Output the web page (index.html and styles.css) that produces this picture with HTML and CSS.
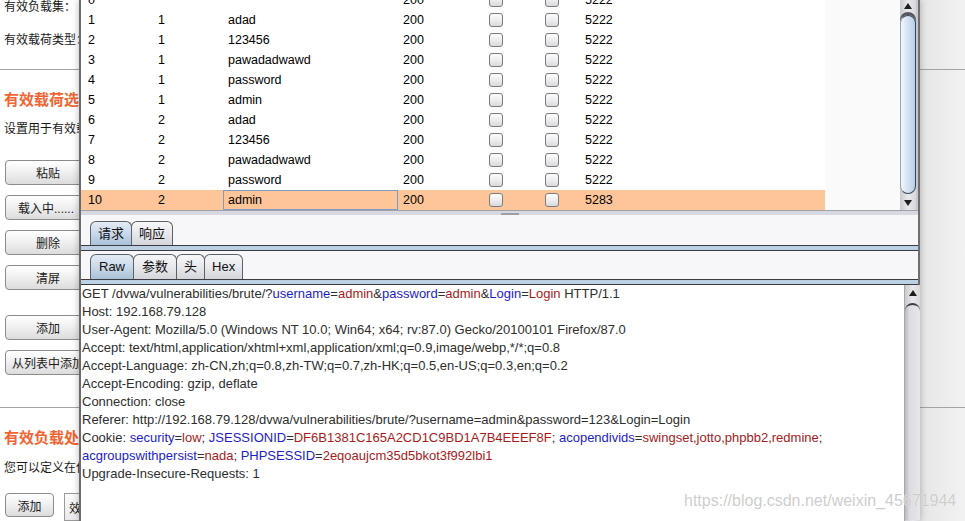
FILE: index.html
```html
<!DOCTYPE html>
<html lang="zh-CN">
<head>
<meta charset="utf-8">
<title>Intruder 攻击结果</title>
<link rel="stylesheet" href="styles.css">
</head>
<body>
<div class="page">
  <div class="lbl clip lbl-first">有效负载集：</div>
  <div class="lbl clip lbl-second">有效载荷类型：</div>
  <div class="sep sep-a"></div>
  <div class="heading clip heading-a">有效载荷选项</div>
  <div class="lbl clip desc-a">设置用于有效载荷</div>
  <div class="btn-col clip">
    <button class="btn">粘贴</button>
    <button class="btn btn-left">载入中......</button>
    <button class="btn">删除</button>
    <button class="btn">清屏</button>
    <button class="btn btn-gap">添加</button>
    <button class="btn btn-left btn-list">从列表中添加</button>
  </div>
  <div class="sep sep-b"></div>
  <div class="heading clip heading-b">有效负载处理</div>
  <div class="lbl clip desc-b">您可以定义在使用</div>
  <div class="bottom-row clip">
    <button class="btn btn-small">添加</button>
    <div class="rule-box">效果</div>
  </div>
</div>

<div class="dialog">
  <div class="results">
    <div class="viewport">
      <div class="rows">
        <div class="row"><span class="c c1">0</span><span class="c c2"></span><span class="c c3"></span><span class="c c4">200</span><span class="c c5"><i class="cb"></i></span><span class="c c6"><i class="cb"></i></span><span class="c c7">5222</span></div>
        <div class="row"><span class="c c1">1</span><span class="c c2">1</span><span class="c c3">adad</span><span class="c c4">200</span><span class="c c5"><i class="cb"></i></span><span class="c c6"><i class="cb"></i></span><span class="c c7">5222</span></div>
        <div class="row"><span class="c c1">2</span><span class="c c2">1</span><span class="c c3">123456</span><span class="c c4">200</span><span class="c c5"><i class="cb"></i></span><span class="c c6"><i class="cb"></i></span><span class="c c7">5222</span></div>
        <div class="row"><span class="c c1">3</span><span class="c c2">1</span><span class="c c3">pawadadwawd</span><span class="c c4">200</span><span class="c c5"><i class="cb"></i></span><span class="c c6"><i class="cb"></i></span><span class="c c7">5222</span></div>
        <div class="row"><span class="c c1">4</span><span class="c c2">1</span><span class="c c3">password</span><span class="c c4">200</span><span class="c c5"><i class="cb"></i></span><span class="c c6"><i class="cb"></i></span><span class="c c7">5222</span></div>
        <div class="row"><span class="c c1">5</span><span class="c c2">1</span><span class="c c3">admin</span><span class="c c4">200</span><span class="c c5"><i class="cb"></i></span><span class="c c6"><i class="cb"></i></span><span class="c c7">5222</span></div>
        <div class="row"><span class="c c1">6</span><span class="c c2">2</span><span class="c c3">adad</span><span class="c c4">200</span><span class="c c5"><i class="cb"></i></span><span class="c c6"><i class="cb"></i></span><span class="c c7">5222</span></div>
        <div class="row"><span class="c c1">7</span><span class="c c2">2</span><span class="c c3">123456</span><span class="c c4">200</span><span class="c c5"><i class="cb"></i></span><span class="c c6"><i class="cb"></i></span><span class="c c7">5222</span></div>
        <div class="row"><span class="c c1">8</span><span class="c c2">2</span><span class="c c3">pawadadwawd</span><span class="c c4">200</span><span class="c c5"><i class="cb"></i></span><span class="c c6"><i class="cb"></i></span><span class="c c7">5222</span></div>
        <div class="row"><span class="c c1">9</span><span class="c c2">2</span><span class="c c3">password</span><span class="c c4">200</span><span class="c c5"><i class="cb"></i></span><span class="c c6"><i class="cb"></i></span><span class="c c7">5222</span></div>
        <div class="row row-sel"><span class="c c1">10</span><span class="c c2">2</span><span class="c c3 focus">admin</span><span class="c c4">200</span><span class="c c5"><i class="cb"></i></span><span class="c c6"><i class="cb"></i></span><span class="c c7">5283</span></div>
      </div>
    </div>
    <div class="vscroll vscroll-table">
      <div class="arrow-btn arrow-top"><i class="tri-up"></i></div>
      <div class="thumb thumb-blue"></div>
      <div class="arrow-btn arrow-bottom"><i class="tri-down"></i></div>
    </div>
  </div>
  <div class="divider"><span class="grip"></span></div>

  <div class="tabs tabs-main">
    <div class="tab tab-on">请求</div>
    <div class="tab">响应</div>
  </div>
  <div class="tabline"></div>

  <div class="tabs tabs-sub">
    <div class="tab tab-on tab-raw">Raw</div>
    <div class="tab tab-wide">参数</div>
    <div class="tab tab-narrow">头</div>
    <div class="tab">Hex</div>
  </div>
  <div class="tabline"></div>

  <div class="request">
    <div class="req-text">
      <div class="ln">GET /dvwa/vulnerabilities/brute/?<span class="k">username</span>=<span class="v">admin</span>&amp;<span class="k">password</span>=<span class="v">admin</span>&amp;<span class="k">Login</span>=<span class="v">Login</span> HTTP/1.1</div>
      <div class="ln">Host: 192.168.79.128</div>
      <div class="ln">User-Agent: Mozilla/5.0 (Windows NT 10.0; Win64; x64; rv:87.0) Gecko/20100101 Firefox/87.0</div>
      <div class="ln">Accept: text/html,application/xhtml+xml,application/xml;q=0.9,image/webp,*/*;q=0.8</div>
      <div class="ln">Accept-Language: zh-CN,zh;q=0.8,zh-TW;q=0.7,zh-HK;q=0.5,en-US;q=0.3,en;q=0.2</div>
      <div class="ln">Accept-Encoding: gzip, deflate</div>
      <div class="ln">Connection: close</div>
      <div class="ln">Referer: http://192.168.79.128/dvwa/vulnerabilities/brute/?username=admin&amp;password=123&amp;Login=Login</div>
      <div class="ln">Cookie: <span class="k">security</span>=<span class="v">low</span>; <span class="k">JSESSIONID</span>=<span class="v">DF6B1381C165A2CD1C9BD1A7B4EEEF8F</span>; <span class="k">acopendivids</span>=<span class="v">swingset,jotto,phpbb2,redmine</span>;</div>
      <div class="ln"><span class="k">acgroupswithpersist</span>=<span class="v">nada</span>; <span class="k">PHPSESSID</span>=<span class="v">2eqoaujcm35d5bkot3f992lbi1</span></div>
      <div class="ln">Upgrade-Insecure-Requests: 1</div>
    </div>
    <div class="vscroll vscroll-req">
      <div class="arrow-btn arrow-top-req"><i class="tri-up"></i></div>
      <div class="thumb thumb-gray"></div>
    </div>
  </div>
</div>

<div class="watermark">https://blog.csdn.net/weixin_45671944</div>
</body>
</html>
```

FILE: styles.css
```css
html, body {
  margin: 0;
  padding: 0;
}

body {
  width: 965px;
  height: 521px;
  overflow: hidden;
  position: relative;
  font-family: "Liberation Sans", Arial, "Noto Sans CJK SC", sans-serif;
  font-size: 12px;
  color: #1a1a1a;
  background: linear-gradient(to right, #ffffff 0, #ffffff 900px, #e6e6e6 920px, #f2f2f2 965px);
}

/* ---------- background page ---------- */
.page {
  padding-left: 4px;
  height: 521px;
  box-sizing: border-box;
}

.clip {
  width: 75px;
  overflow: hidden;
}

.lbl {
  line-height: 14px;
  white-space: nowrap;
  font-size: 12px;
  color: #1a1a1a;
}

.lbl-first { margin-top: 0; }
.lbl-second { margin-top: 19px; }
.desc-a { margin-top: 12px; }
.desc-b { margin-top: 13px; }

.sep {
  height: 1px;
  background: #a4a4a4;
  margin-left: -4px;
}
.sep-a { margin-top: 22px; }
.sep-b { margin-top: 32px; }

.heading {
  line-height: 20px;
  font-size: 15px;
  font-weight: bold;
  color: #f26532;
  white-space: nowrap;
}
.heading-a { margin-top: 20px; }
.heading-b { margin-top: 20px; }

.btn-col {
  margin-top: 24px;
  display: flex;
  flex-direction: column;
  gap: 10px;
  padding-left: 1px;
  box-sizing: border-box;
}

.btn {
  width: 86px;
  min-width: 86px;
  height: 25px;
  flex: none;
  box-sizing: border-box;
  border: 1px solid #8c8c8c;
  border-radius: 4px;
  background: linear-gradient(#ffffff 0%, #f1f1f1 45%, #dcdcdc 100%);
  font-family: "Liberation Sans", Arial, "Noto Sans CJK SC", sans-serif;
  font-size: 12px;
  color: #1a1a1a;
  padding: 0;
  text-align: center;
  white-space: nowrap;
  overflow: hidden;
}

.btn-left {
  text-align: left;
  padding-left: 12px;
}

.btn-list { padding-left: 6px; }

.btn-gap { margin-top: 15px; }

.bottom-row {
  margin-top: 18px;
  display: flex;
  gap: 10px;
  padding-left: 1px;
  box-sizing: border-box;
}

.btn-small { width: 49px; min-width: 49px; height: 24px; }

.rule-box {
  width: 60px;
  flex: none;
  height: 28px;
  box-sizing: border-box;
  border: 1px solid #9a9a9a;
  background: linear-gradient(#fbfbfb, #e9e9e9);
  padding: 5px 0 0 4px;
  white-space: nowrap;
}

/* ---------- dialog window ---------- */
.dialog {
  position: absolute;
  left: 79px;
  top: 0;
  width: 841px;
  height: 521px;
  box-sizing: border-box;
  border-left: 2px solid #6b6b6b;
  border-right: 2px solid #6f6f6f;
  background: #f7f7f9;
  box-shadow: 0 0 7px rgba(0, 0, 0, 0.28);
  display: flex;
  flex-direction: column;
}

.results {
  height: 211px;
  display: flex;
  border-bottom: 1px solid #9ea2aa;
  box-sizing: border-box;
  padding-right: 2px;
  background: #c8c8cc;
}

.viewport {
  flex: 1;
  overflow: hidden;
  background: #fafafa;
}

.rows {
  margin-top: -10px;
  width: 744px;
  background: #ffffff;
}

.row {
  display: flex;
  height: 20px;
  align-items: center;
  color: #000;
  font-size: 12.5px;
}

.row-sel { background: #fec698; }

.c {
  box-sizing: border-box;
  height: 20px;
  line-height: 20px;
  white-space: nowrap;
}
.c1 { width: 72px; padding-left: 7px; }
.c2 { width: 70px; padding-left: 5px; }
.c3 { width: 175px; padding-left: 5px; }
.c4 { width: 70px; padding-left: 5px; }
.c5, .c6 {
  width: 56px;
  display: flex;
  align-items: center;
  justify-content: center;
}
.c7 { flex: 1; padding-left: 5px; }

.focus {
  border: 1px solid #7d9cc4;
  line-height: 18px;
  padding-left: 4px;
}

.cb {
  display: block;
  width: 14px;
  height: 14px;
  box-sizing: border-box;
  border: 1px solid #7b7b7f;
  border-radius: 3px;
  background: linear-gradient(#fbfbfb 0%, #eeeef0 50%, #d9d9dd 100%);
}

/* scrollbars */
.vscroll {
  width: 16px;
  display: flex;
  flex-direction: column;
  background: linear-gradient(to right, #c9cace, #e9e9ec 50%, #d7d8dc);
}

.vscroll-table { height: 210px; }

.arrow-btn {
  display: flex;
  justify-content: center;
}

.arrow-top { height: 11px; align-items: center; }
.arrow-bottom { height: 15px; align-items: center; }
.arrow-top-req { height: 16px; align-items: center; }

.tri-up {
  width: 0;
  height: 0;
  border-left: 4px solid transparent;
  border-right: 4px solid transparent;
  border-bottom: 6px solid #1e1e1e;
}

.tri-down {
  width: 0;
  height: 0;
  border-left: 4px solid transparent;
  border-right: 4px solid transparent;
  border-top: 6px solid #1e1e1e;
}

.thumb {
  flex: 1;
  box-sizing: border-box;
  margin: 1px 0;
}

.thumb-blue {
  border: 1px solid #33465c;
  border-radius: 8px;
  border-left-color: #8ea3b8;
  background: linear-gradient(to right, #f3f7fb 0%, #d9e6f3 40%, #b9cfe6 100%);
  box-shadow: 0 -3px 0 #55585e;
  margin-top: 4px;
}

.thumb-gray {
  border-top: 2px solid #3a3c40;
  border-radius: 8px 8px 0 0;
  background: linear-gradient(to right, #b8b9bd 0%, #dcdde0 30%, #e6e7ea 100%);
  margin-top: 2px;
}

.divider {
  height: 4px;
  background: #d8d9e0;
  display: flex;
  justify-content: center;
}

.grip {
  display: block;
  width: 18px;
  height: 2px;
  margin-top: 2px;
  margin-left: 20px;
  background: #9d9fa6;
}

/* tabs */
.tabs {
  display: flex;
  padding-left: 9px;
  align-items: flex-end;
}

.tabs-main { margin-top: 6px; }
.tabs-sub { margin-top: 3px; }

.tab {
  height: 24px;
  box-sizing: border-box;
  padding: 0 7px;
  line-height: 23px;
  border: 1px solid #5d6066;
  border-bottom: none;
  border-radius: 6px 6px 0 0;
  background: linear-gradient(#f7f7f9 0%, #e6e7eb 55%, #d3d5da 100%);
  color: #111;
  font-size: 13px;
  white-space: nowrap;
}

.tab + .tab { margin-left: -1px; }

.tab-on {
  background: linear-gradient(#e3ecf5 0%, #c6d7e8 55%, #a9c1d9 100%);
}

.tabs-sub .tab { height: 25px; line-height: 24px; }
.tab-raw { padding: 0 8px; }
.tab-wide { padding: 0 8px; }
.tab-narrow { padding: 0 7px; }

.tabline {
  height: 4px;
  border-top: 1px solid #3a3c42;
  border-bottom: 1px solid #3a3c42;
  background: #bcd0e4;
}

/* request */
.request {
  flex: 1;
  display: flex;
  background: #ffffff;
  margin-right: -2px;
  min-height: 0;
}

.req-text {
  flex: 1;
  padding: 0 0 0 1px;
  color: #2e2e2e;
  font-size: 13px;
  line-height: 18px;
  white-space: nowrap;
  overflow: hidden;
}

.k { color: #1d1dc9; }
.v { color: #a51c1c; }

.vscroll-req {
  width: 15px;
  border-left: 1px solid #a8a8ad;
}

.watermark {
  position: absolute;
  left: 684px;
  top: 492px;
  font-family: "Liberation Sans", Arial, sans-serif;
  font-size: 16px;
  color: rgba(196, 196, 196, 0.85);
  white-space: nowrap;
  text-shadow: 0 0 1px rgba(255, 255, 255, 0.9);
}
```
